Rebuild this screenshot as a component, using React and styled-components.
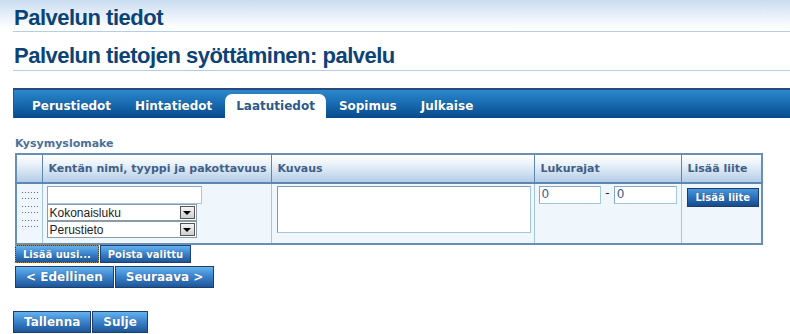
import React from "react";
import styled, { createGlobalStyle } from "styled-components";

const GlobalStyle = createGlobalStyle`
  html, body {
    margin: 0;
    padding: 0;
    background: #fff;
  }
  body {
    font-family: "DejaVu Sans", Verdana, sans-serif;
  }
`;

const Page = styled.div`
  width: 790px;
  height: 334px;
  overflow: hidden;
  box-sizing: border-box;
  padding-left: 13px;
  background: linear-gradient(to bottom, #c9ddf1 0px, #ffffff 28px);
`;

const Heading = styled.h1`
  margin: ${(p) => p.$top}px 0 0 0;
  padding: 0 0 ${(p) => p.$bottom}px 1px;
  font-family: "Liberation Sans", Arial, sans-serif;
  font-size: 22px;
  line-height: 22px;
  font-weight: bold;
  letter-spacing: -0.5px;
  color: #0c4377;
  border-bottom: 1px solid #b4cfe3;
`;

const TabBar = styled.div`
  margin-top: 17px;
  height: 28px;
  display: flex;
  align-items: flex-end;
  gap: 2px;
  padding-left: 7px;
  border-top: 2px solid #29497c;
  border-left: 1px solid #2c5590;
  background: linear-gradient(to bottom, #2b88cb 0%, #1a6db2 45%, #064a8c 100%);
`;

const Tab = styled.div`
  height: 24px;
  box-sizing: border-box;
  padding: 6px 11px 0 11px;
  font-size: 12px;
  font-weight: bold;
  line-height: 13px;
  color: ${(p) => (p.$active ? "#2d5a8b" : "#ffffff")};
  background: ${(p) => (p.$active ? "#ffffff" : "transparent")};
  border-radius: 7px 7px 0 0;
  text-shadow: ${(p) => (p.$active ? "none" : "0 0 1px rgba(0,0,0,0.3)")};
`;

const SectionTitle = styled.div`
  margin: 19px 0 0 2px;
  font-size: 11px;
  font-weight: bold;
  line-height: 13px;
  color: #4c6f98;
`;

const Table = styled.table`
  margin: 3px 0 0 2px;
  width: 746px;
  border-collapse: collapse;
  border: 2px solid #6a8fb6;
  table-layout: fixed;
`;

const Col = styled.col`
  width: ${(p) => p.$w}px;
`;

const BodyRow = styled.tr`
  height: 61px;
`;

const HeadCell = styled.th`
  box-sizing: border-box;
  height: 29px;
  padding: 0 0 0 6px;
  text-align: left;
  font-size: 11px;
  font-weight: bold;
  color: #3f5f88;
  background: linear-gradient(to bottom, #ffffff 0%, #e9f1f9 35%, #b3cde6 100%);
  border-left: 1px solid #5d87b0;
  border-bottom: 2px solid #5d87b0;
  white-space: nowrap;
  overflow: hidden;
`;

const Cell = styled.td`
  vertical-align: top;
  padding: 2px 4px 0 ${(p) => p.$pad ?? 4}px;
  background: #eff7fd;
  border-left: 1px solid ${(p) => (p.$first ? "#6a8fb6" : "#a6c5de")};
`;

const Handle = styled.svg`
  display: block;
  margin: 5px 0 0 1px;
`;

const TextInput = styled.div`
  box-sizing: border-box;
  width: ${(p) => p.$w}px;
  height: 18px;
  background: #fff;
  border: 1px solid #a6c6de;
  border-top-color: #8aa6c0;
  border-left-color: #8aa6c0;
  font-size: 12px;
  line-height: 15px;
  padding-left: 2px;
  color: #3a5f8a;
`;

const SelectBox = styled.div`
  box-sizing: border-box;
  width: 150px;
  height: 17px;
  display: flex;
  align-items: center;
  justify-content: space-between;
  background: #fff;
  border: 1px solid #8a9aa8;
  font-family: "Liberation Sans", Arial, sans-serif;
  font-size: 12px;
  color: #222;
  padding-left: 2px;
`;

const SelectArrow = styled.span`
  width: 15px;
  height: 13px;
  margin-right: 1px;
  box-sizing: border-box;
  border: 1px solid #555;
  background: linear-gradient(to bottom, #f4f4f4, #cfcfcf);
  display: flex;
  align-items: center;
  justify-content: center;
  &::after {
    content: "";
    border-left: 4px solid transparent;
    border-right: 4px solid transparent;
    border-top: 4px solid #000;
  }
`;

const TextArea = styled.div`
  box-sizing: border-box;
  width: 254px;
  height: 47px;
  margin-left: 1px;
  background: #fff;
  border: 1px solid #a6c6de;
  border-top-color: #7d9ab6;
  border-left-color: #7d9ab6;
`;

const RangeRow = styled.div`
  display: flex;
  align-items: flex-start;
  gap: 4px;
  font-size: 12px;
  color: #222;
`;

const Dash = styled.span`
  line-height: 14px;
`;

const Button = styled.button`
  box-sizing: border-box;
  height: ${(p) => (p.$small ? 18 : 22)}px;
  padding: 0 ${(p) => (p.$small ? 7 : 10)}px;
  font-family: "DejaVu Sans", Verdana, sans-serif;
  font-size: ${(p) => (p.$small ? 10 : 12)}px;
  font-weight: bold;
  color: #fff;
  text-shadow: 0 0 1px rgba(0, 0, 0, 0.4);
  background: linear-gradient(to bottom, #66b2ee 0%, #3c86cf 45%, #1e5598 100%);
  border: 1px solid #1d3f6f;
  outline: ${(p) => (p.$focus ? "1px dotted #b08a3a" : "none")};
  outline-offset: -1px;
  cursor: pointer;
  white-space: nowrap;
`;

const AttachButton = styled(Button)`
  height: 19px;
  padding: 0 8px;
  margin-left: 1px;
  background: linear-gradient(to bottom, #4a96dc 0%, #2a70bb 50%, #164a8c 100%);
  border-color: #1a3d6b;
`;

const ButtonRow = styled.div`
  display: flex;
  gap: 1px;
  margin: ${(p) => p.$top}px 0 0 ${(p) => p.$left}px;
`;

const tabs = ["Perustiedot", "Hintatiedot", "Laatutiedot", "Sopimus", "Julkaise"];

function DragHandle() {
  const rows = [0, 6, 14, 20, 28, 34];
  return (
    <Handle width="17" height="40" viewBox="0 0 17 40">
      {rows.map((y) => (
        <line
          key={y}
          x1="1"
          y1={y + 1.5}
          x2="17"
          y2={y + 1.5}
          stroke="#5566dd"
          strokeWidth="1"
          strokeDasharray="1 2"
        />
      ))}
    </Handle>
  );
}

export default function App() {
  return (
    <>
      <GlobalStyle />
      <Page>
        <Heading $top={7} $bottom={2}>Palvelun tiedot</Heading>
        <Heading as="h2" $top={13} $bottom={3}>
          Palvelun tietojen syöttäminen: palvelu
        </Heading>

        <TabBar>
          {tabs.map((t) => (
            <Tab key={t} $active={t === "Laatutiedot"}>
              {t}
            </Tab>
          ))}
        </TabBar>

        <SectionTitle>Kysymyslomake</SectionTitle>
        <Table>
          <colgroup>
            <Col $w={26} />
            <Col $w={229} />
            <Col $w={263} />
            <Col $w={147} />
            <Col $w={81} />
          </colgroup>
          <thead>
            <tr>
              <HeadCell />
              <HeadCell>Kentän nimi, tyyppi ja pakottavuus</HeadCell>
              <HeadCell>Kuvaus</HeadCell>
              <HeadCell>Lukurajat</HeadCell>
              <HeadCell>Lisää liite</HeadCell>
            </tr>
          </thead>
          <tbody>
            <BodyRow>
              <Cell $first $pad={3}>
                <DragHandle />
              </Cell>
              <Cell>
                <TextInput $w={155} />
                <SelectBox>
                  Kokonaisluku
                  <SelectArrow />
                </SelectBox>
                <SelectBox>
                  Perustieto
                  <SelectArrow />
                </SelectBox>
              </Cell>
              <Cell>
                <TextArea />
              </Cell>
              <Cell>
                <RangeRow>
                  <TextInput $w={65}>0</TextInput>
                  <Dash>-</Dash>
                  <TextInput $w={65}>0</TextInput>
                </RangeRow>
              </Cell>
              <Cell>
                <AttachButton $small>Lisää liite</AttachButton>
              </Cell>
            </BodyRow>
          </tbody>
        </Table>

        <ButtonRow $top={0} $left={2}>
          <Button $small $focus>
            Lisää uusi...
          </Button>
          <Button $small>Poista valittu</Button>
        </ButtonRow>
        <ButtonRow $top={3} $left={2}>
          <Button>&lt; Edellinen</Button>
          <Button>Seuraava &gt;</Button>
        </ButtonRow>
        <ButtonRow $top={23} $left={0}>
          <Button>Tallenna</Button>
          <Button>Sulje</Button>
        </ButtonRow>
      </Page>
    </>
  );
}
